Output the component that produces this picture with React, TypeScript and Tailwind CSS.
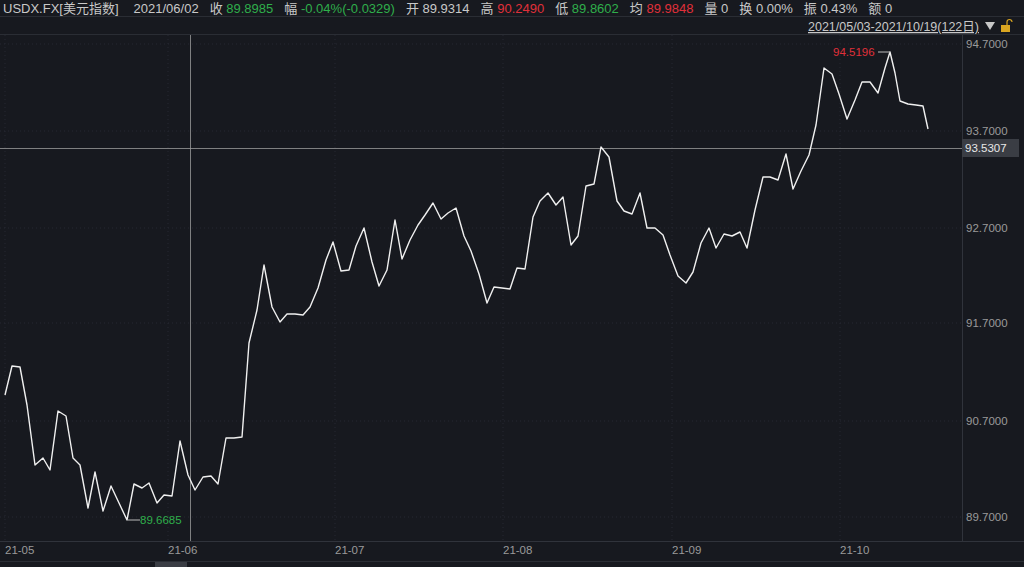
const pts: [number, number][] = [
  [5,395],[12,366],[20,367],[27,405],[35,465],[43,458],[50,470],[58,411],[66,416],[73,458],[80,465],[88,508],[95,472],[103,511],[111,486],[119,503],[127,520],[134,484],[142,488],[149,483],[157,503],[164,495],[172,496],[180,441],[188,475],[195,490],[203,477],[211,476],[218,484],[226,438],[234,438],[242,437],[249,343],[257,310],[264,265],[272,307],[280,322],[287,314],[295,314],[303,315],[310,307],[318,288],[326,260],[333,242],[341,271],[349,270],[356,246],[364,228],[372,262],[379,286],[387,270],[395,220],[402,259],[410,240],[418,225],[425,215],[433,203],[441,219],[448,213],[456,208],[464,236],[471,251],[479,274],[487,303],[494,287],[502,288],[510,289],[517,268],[525,269],[533,217],[540,201],[548,193],[556,205],[563,197],[571,245],[578,236],[586,186],[594,184],[601,147],[609,157],[617,201],[624,211],[632,214],[640,193],[647,228],[655,228],[663,235],[670,255],[678,276],[686,283],[693,272],[701,243],[709,228],[716,248],[724,234],[732,236],[740,232],[747,248],[755,210],[763,177],[770,177],[778,180],[786,154],[793,189],[801,171],[809,155],[816,125],[824,68],[832,74],[839,94],[847,119],[855,100],[862,82],[870,82],[878,93],[885,68],[890,52],[895,73],[900,101],[908,104],[916,105],[923,106],[928,129],
];

const yTicks: [string, number][] = [
  ['94.7000', 44], ['93.7000', 131], ['92.7000', 228], ['91.7000', 323], ['90.7000', 421], ['89.7000', 517],
];
const xTicks: [string, number][] = [
  ['21-05', 5], ['21-06', 168], ['21-07', 335], ['21-08', 503], ['21-09', 672], ['21-10', 840],
];

function Item({ k, v, c }: { k: string; v: string; c: string }) {
  return (
    <span className="whitespace-pre">
      <span className="text-[#c8c8c8]">{k} </span>
      <span className={c}>{v}</span>
    </span>
  );
}

export default function App() {
  const font = { fontFamily: '"Liberation Sans", "Noto Sans CJK SC", sans-serif' };
  return (
    <div className="w-[1024px] h-[567px] bg-[#17191f] overflow-hidden text-[13px] text-[#c8c8c8]" style={font}>
      <div className="h-[17px] flex items-center gap-[11px] pl-[3px] leading-none border-b border-[#2a2d34]">
        <span>USDX.FX[美元指数]</span>
        <span className="ml-[4px]">2021/06/02</span>
        <Item k="收" v="89.8985" c="text-[#2fae4b]" />
        <Item k="幅" v="-0.04%(-0.0329)" c="text-[#2fae4b]" />
        <Item k="开" v="89.9314" c="text-[#c8c8c8]" />
        <Item k="高" v="90.2490" c="text-[#e0303a]" />
        <Item k="低" v="89.8602" c="text-[#2fae4b]" />
        <Item k="均" v="89.9848" c="text-[#e0303a]" />
        <Item k="量" v="0" c="text-[#c8c8c8]" />
        <Item k="换" v="0.00%" c="text-[#c8c8c8]" />
        <Item k="振" v="0.43%" c="text-[#c8c8c8]" />
        <Item k="额" v="0" c="text-[#c8c8c8]" />
      </div>
      <svg width="1024" height="550" viewBox="0 17 1024 550" className="block" style={font}>
        <line x1="0" y1="34.5" x2="1024" y2="34.5" stroke="#2a2d34" />
        <text x="808" y="31" fill="#c8c8c8" fontSize="12.5" textDecoration="underline">2021/05/03-2021/10/19(122日)</text>
        <path d="M985 22 L995 22 L990 30 Z" fill="#c8c8c8" />
        <rect x="1001" y="25" width="9" height="7" fill="#d9a521" />
        <path d="M1007 25 V22 a2.5 2.5 0 0 1 5 0" stroke="#d9a521" fill="none" strokeWidth="1.2" />
        {xTicks.map(([, x]) => (
          <line key={x} x1={x} x2={x} y1="35" y2="541" stroke="#262932" strokeDasharray="1 3" />
        ))}
        {yTicks.map(([, y]) => (
          <line key={y} x1="0" x2="962" y1={y} y2={y} stroke="#262932" strokeDasharray="1 3" />
        ))}
        <line x1="962.5" y1="35" x2="962.5" y2="541" stroke="#30333b" />
        <line x1="0" y1="541.5" x2="1024" y2="541.5" stroke="#30333b" />
        <line x1="190.5" y1="35" x2="190.5" y2="541" stroke="#9a9a9a" strokeWidth="0.8" />
        <line x1="0" y1="148.5" x2="962" y2="148.5" stroke="#9a9a9a" strokeWidth="0.8" />
        <polyline points={pts.map(p => p.join(',')).join(' ')} fill="none" stroke="#f0f0f0" strokeWidth="1.4" strokeLinejoin="round" />
        <line x1="128" y1="520" x2="140" y2="520" stroke="#bbbbbb" />
        <text x="140" y="524" fill="#2fae4b" fontSize="11.5">89.6685</text>
        <line x1="878" y1="52" x2="890" y2="52" stroke="#bbbbbb" />
        <text x="833" y="56" fill="#e0303a" fontSize="11.5">94.5196</text>
        {yTicks.map(([t, y]) => (
          <text key={t} x="966" y={y + 4} fill="#9a9a9a" fontSize="11.5">{t}</text>
        ))}
        <rect x="962" y="139" width="57" height="18" fill="#3a3d44" />
        <text x="965" y="152" fill="#e8e8e8" fontSize="11.5">93.5307</text>
        {xTicks.map(([t, x]) => (
          <text key={t} x={x} y="554" fill="#9a9a9a" fontSize="11.5">{t}</text>
        ))}
        <line x1="0" y1="561.5" x2="1024" y2="561.5" stroke="#2a2d34" />
        <rect x="155" y="562" width="32" height="5" fill="#3a3d44" />
      </svg>
    </div>
  );
}
